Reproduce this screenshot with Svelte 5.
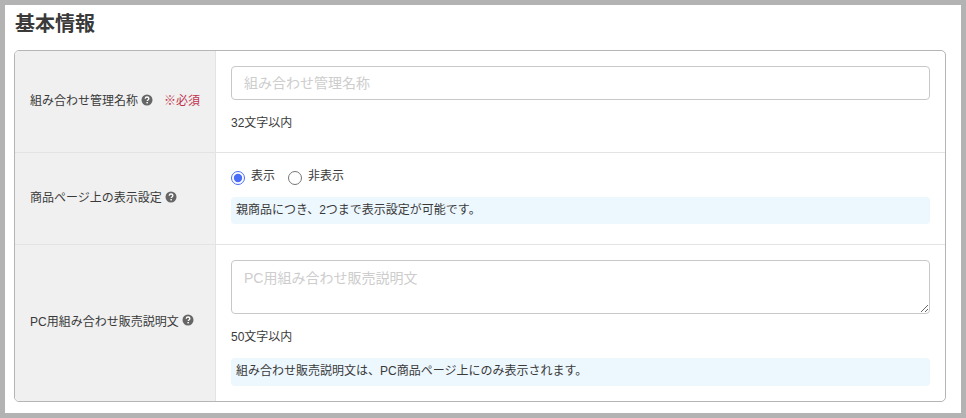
<script lang="ts">
    const displayOptions = [
        { label: "表示", checked: true },
        { label: "非表示", checked: false }
    ];
</script>

{#snippet help()}
    <svg class="help" viewBox="0 0 12 12" width="12" height="12" aria-hidden="true">
        <circle cx="6" cy="6" r="5.5" fill="#666" />
        <path d="M4.2 4.7C4.3 3.6 5 3 6 3c1.100 0 1.900.6 1.900 1.600 0 1.300-1.700 1.300-1.700 2.500" fill="none" stroke="#fff" stroke-width="1.300" />
        <rect x="5.400" y="8" width="1.500" height="1.400" fill="#fff" />
    </svg>
{/snippet}

<div class="page">
    <h2>基本情報</h2>
    <div class="card">
        <div class="row first">
            <div class="head">
                <span>組み合わせ管理名称</span>
                {@render help()}
                <span class="required">※必須</span>
            </div>
            <div class="body">
                <input class="field" type="text" placeholder="組み合わせ管理名称" />
                <p class="limit">32文字以内</p>
            </div>
        </div>
        <div class="row second">
            <div class="head">
                <span>商品ページ上の表示設定</span>
                {@render help()}
            </div>
            <div class="body">
                <div class="radios">
                    {#each displayOptions as option}
                        <label>
                            <input type="radio" name="display" checked={option.checked} />
                            <span>{option.label}</span>
                        </label>
                    {/each}
                </div>
                <p class="note">親商品につき、2つまで表示設定が可能です。</p>
            </div>
        </div>
        <div class="row third">
            <div class="head">
                <span>PC用組み合わせ販売説明文</span>
                {@render help()}
            </div>
            <div class="body">
                <textarea class="field" placeholder="PC用組み合わせ販売説明文"></textarea>
                <p class="limit">50文字以内</p>
                <p class="note">組み合わせ販売説明文は、PC商品ページ上にのみ表示されます。</p>
            </div>
        </div>
    </div>
</div>

<style>
    :global(body) {
        background: #fff;
    }

    .page {
        box-sizing: border-box;
        width: 966px;
        height: 418px;
        padding: 0 15px 0 9px;
        border: 5px solid #b3b3b3;
        background: #fff;
        color: #3a3a3a;
        font-family: "Liberation Sans", "Noto Sans CJK JP", sans-serif;
        font-size: 12px;
        overflow: hidden;
    }

    h2 {
        margin: 0;
        height: 45px;
        box-sizing: border-box;
        padding: 6px 0 0 1px;
        font-size: 20px;
        line-height: 26px;
        font-weight: bold;
    }

    .card {
        box-sizing: border-box;
        width: 932px;
        height: 352px;
        border: 1px solid #b5b5b5;
        border-radius: 5px;
        overflow: hidden;
    }

    .row {
        display: flex;
        border-bottom: 1px solid #e3e3e3;
    }

    .first {
        height: 101px;
    }

    .second {
        height: 91px;
    }

    .third {
        height: 156px;
        border-bottom: 0;
    }

    .head {
        box-sizing: border-box;
        width: 201px;
        display: flex;
        align-items: center;
        padding: 0 0 4px 15px;
        gap: 3px;
        background: #f0f0f0;
        border-right: 1px solid #e3e3e3;
    }

    .third .head {
        padding-bottom: 6px;
    }

    .help {
        flex: none;
    }

    .required {
        margin-left: 8px;
        color: #c0334d;
    }

    .body {
        flex: 1;
        padding: 15px 15px 0;
        min-width: 0;
    }

    .field {
        display: block;
        box-sizing: border-box;
        width: 100%;
        margin: 0;
        padding: 0 12px;
        border: 1px solid #c8c8c8;
        border-radius: 4px;
        background: #fff;
        font-family: inherit;
        font-size: 14px;
        outline: none;
    }

    input.field {
        height: 34px;
    }

    textarea.field {
        height: 54px;
        padding-top: 7px;
        line-height: 20px;
    }

    .field::placeholder {
        color: #cdcdcd;
        opacity: 1;
    }

    .limit {
        margin: 15px 0 0;
        line-height: 16px;
    }

    .radios {
        display: flex;
        gap: 13px;
        height: 29px;
    }

    label {
        display: flex;
        gap: 6px;
        height: 20px;
        align-items: flex-start;
    }

    label span {
        line-height: 16px;
    }

    input[type="radio"] {
        width: 14px;
        height: 14px;
        margin: 3px 0 0;
        accent-color: #4a6cf7;
    }

    .note {
        margin: 13px 0 0;
        padding: 0 5px;
        height: 28px;
        box-sizing: border-box;
        line-height: 27px;
        background: #edf7fe;
        border-radius: 4px;
    }

    .radios + .note {
        margin-top: 0;
        height: 27px;
    }
</style>
